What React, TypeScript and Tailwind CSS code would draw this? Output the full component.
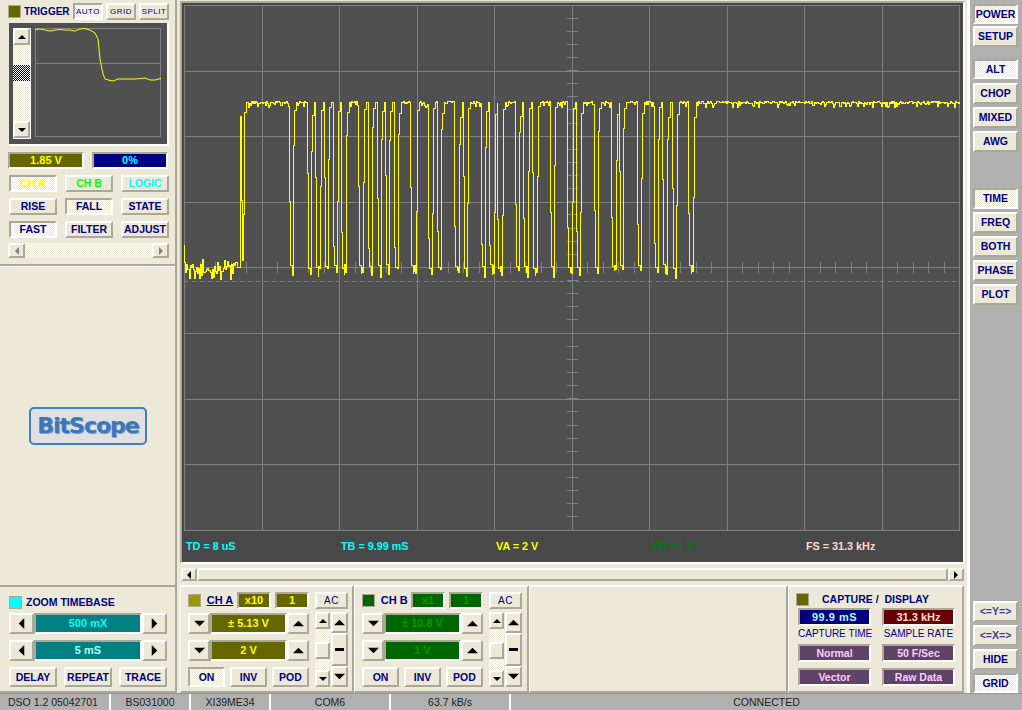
import React from "react";

const raised = "border-2 border-t-white border-l-white border-r-[#aca899] border-b-[#aca899] bg-[#ece9d8]";
const sunken = "border-2 border-t-[#aca899] border-l-[#aca899] border-r-white border-b-white";
const dither = "bg-[repeating-conic-gradient(#ece9d8_0_25%,#ffffff_0_50%)] bg-[length:2px_2px]";
const pressed = "border-2 border-t-[#aca899] border-l-[#aca899] border-r-white border-b-white bg-[repeating-conic-gradient(#ece9d8_0_25%,#ffffff_0_50%)] bg-[length:2px_2px]";

function Btn({ label, className = "", on = false, tone = "text-[#000080] font-bold text-[10.5px]" }: { label: React.ReactNode; className?: string; on?: boolean; tone?: string }) {
  return (
    <div className={`flex items-center justify-center shrink-0 leading-none whitespace-nowrap ${on ? pressed : raised} ${tone} ${className}`}>
      {label}
    </div>
  );
}

function Tri({ dir, s = 11, fill = "#000" }: { dir: "up" | "down" | "left" | "right"; s?: number; fill?: string }) {
  const pts = { up: "5,2.5 0,7.5 10,7.5", down: "0,2.5 10,2.5 5,7.5", left: "2.5,5 7.5,0 7.5,10", right: "2.5,0 2.5,10 7.5,5" }[dir];
  return (
    <svg width={s} height={s} viewBox="0 0 10 10" className="block">
      <polygon points={pts} fill={fill} />
    </svg>
  );
}

function Disp({ label, className = "" }: { label: string; className?: string }) {
  return <div className={`flex items-center justify-center shrink-0 font-bold text-[11px] leading-none whitespace-nowrap ${sunken} ${className}`}>{label}</div>;
}

const edges: [number, number][] = [
  [289, 293], [307, 311], [315, 320], [324, 328], [333, 337], [341, 346], [358, 363], [368, 372], [377, 381], [385, 389],
  [394, 398], [410, 416], [428, 432], [437, 441], [454, 459], [463, 467], [481, 485], [489, 494], [497, 502], [515, 519],
  [523, 528], [532, 537], [550, 554], [567, 572], [576, 580], [594, 598], [611, 616], [619, 623], [637, 641], [654, 658],
  [662, 667], [672, 676], [688, 693],
];

function wave() {
  let seed = 12345;
  const r = (a: number, b: number) => {
    seed = (seed * 1103515245 + 12345) & 0x7fffffff;
    return a + ((seed >> 8) % 1000) / 1000 * (b - a);
  };
  const X = (v: number) => (Math.round(v) + 0.5).toFixed(1);
  const Y = (v: number) => (Math.round(v) + 0.5).toFixed(1);
  let d = `M184.5 244.5 V262.5`;
  let x = 184;
  const lowNoise = () => {
    const v = r(0, 1);
    return v < 0.18 ? r(272, 279) : v < 0.45 ? r(259, 264) : r(264, 272);
  };
  const highNoise = () => {
    const v = r(0, 1);
    return v < 0.18 ? r(104, 107) : r(101, 103);
  };
  while (x < 238) {
    x += 1;
    d += ` H${X(x)} V${Y(lowNoise())}`;
  }
  d += ` H240.5 V116.5 H241.5 V200.5 H242.5 V260.5 H243.5 V214.5 H244.5 V112.5 H246.5 V102.5`;
  x = 246;
  let e = 0;
  while (x < 959) {
    const cur = edges[e];
    if (cur && x >= cur[0] - 1) {
      x = cur[0];
      d += ` H${X(x)} V${Y(r(170, 250))} H${X(x + 1)} V${Y(r(250, 258))}`;
      x += 2;
      while (x < cur[1] - 1) {
        x += 1;
        d += ` V${Y(r(264, 268))} H${X(x)} V${Y(r(268, 278))}`;
      }
      x = cur[1];
      d += ` H${X(x)} V${Y(r(125, 215))} H${X(x + 1)} V${Y(r(106, 118))} H${X(x + 3)} V102.5`;
      x += 3;
      e++;
    } else {
      x += 1;
      d += ` H${X(Math.min(x, 959))} V${Y(highNoise())}`;
    }
  }
  return d;
}

const WAVE = wave();
const VX = Array.from({ length: 9 }, (_, i) => 262 + i * 77.5);
const HY = [71, 136, 202, 333, 399, 464];
const TX = Array.from({ length: 50 }, (_, i) => 200 + i * 15.5);
const TY = Array.from({ length: 40 }, (_, i) => 18 + i * 13.13);

function Scope() {
  return (
    <svg viewBox="182 3 781 528" width={781} height={528} className="block" shapeRendering="crispEdges">
      <rect x="184.5" y="5.5" width="775" height="525" fill="#505050" stroke="#808080" />
      <g stroke="#808080" strokeWidth="1" fill="none">
        {VX.map((x) => <line key={x} x1={Math.floor(x) + 0.5} x2={Math.floor(x) + 0.5} y1="5" y2="530" />)}
        {HY.map((y) => <line key={y} x1="184" x2="960" y1={y + 0.5} y2={y + 0.5} />)}
        <line x1="184" x2="960" y1="267.5" y2="267.5" />
        {TX.map((x) => <line key={x} x1={Math.floor(x) + 0.5} x2={Math.floor(x) + 0.5} y1="262" y2="273" />)}
        {TY.map((y) => <line key={y} x1="567" x2="578" y1={Math.floor(y) + 0.5} y2={Math.floor(y) + 0.5} />)}
        <line x1="184" x2="960" y1="281.5" y2="281.5" strokeDasharray="4 4" />
      </g>
      <path d={WAVE} fill="none" stroke="#ffff00" strokeWidth="1" />
    </svg>
  );
}

function TriggerPlot() {
  return (
    <svg viewBox="35 29 126 110" width={126} height={110} className="block">
      <rect x="35.5" y="29.5" width="125" height="108" fill="none" stroke="#808080" />
      <line x1="35" x2="161" y1="64.5" y2="64.5" stroke="#808080" />
      <polyline fill="none" stroke="#ffff00" strokeWidth="1" points="35,30.5 40,30 45,31 50,32 55,31 60,30.5 65,31 70,31 75,32 80,30 85,29.5 90,31 95,34 98,40 100,60 103,75 105,80 110,81.5 113,82 118,80 125,80 135,80 145,79 150,81 155,81 161,79.5" />
    </svg>
  );
}

function VScroll({ className = "", gap = "h-[13px]", checker = false }: { className?: string; gap?: string; checker?: boolean }) {
  return (
    <div className={`flex flex-col shrink-0 ${dither} ${className}`}>
      <Btn label={<Tri dir="up" s={8} />} className="h-[17px] w-full" />
      <div className={gap} />
      {checker ? (
        <div className="h-[16px] w-full bg-[repeating-conic-gradient(#000000_0_25%,#ffffff_0_50%)] bg-[length:2px_2px]" />
      ) : (
        <Btn label="" className="h-[17px] w-full" />
      )}
      <div className="flex-1" />
      <Btn label={<Tri dir="down" s={8} />} className="h-[17px] w-full" />
    </div>
  );
}

function Channel({ swatch, name, under, x, n, range, off, bg, fg, on }: { swatch: string; name: string; under?: boolean; x: string; n: string; range: string; off: string; bg: string; fg: string; on?: boolean }) {
  const disp = `${bg} ${fg}`;
  return (
    <div className="flex gap-[6px] pl-[7px] pt-[5px]">
      <div className="flex flex-col w-[121px]">
        <div className="flex items-center h-[17px]">
          <div className={`w-[13px] h-[13px] border border-[#aca899] ${swatch}`} />
          <span className={`ml-[6px] w-[31px] font-bold text-[11px] leading-none text-[#000080] whitespace-nowrap ${under ? "underline" : ""}`}>{name}</span>
          <Disp label={x} className={`w-[34px] h-[17px] ${disp}`} />
          <Disp label={n} className={`ml-[4px] w-[34px] h-[17px] ${disp}`} />
        </div>
        <div className="flex mt-[4px] h-[21px]">
          <Btn label={<Tri dir="down" />} className="w-[22px]" />
          <Disp label={range} className={`w-[77px] ${disp}`} />
          <Btn label={<Tri dir="up" />} className="w-[22px]" />
        </div>
        <div className="flex mt-[6px] h-[21px]">
          <Btn label={<Tri dir="down" />} className="w-[22px]" />
          <Disp label={off} className={`w-[77px] ${disp}`} />
          <Btn label={<Tri dir="up" />} className="w-[22px]" />
        </div>
        <div className="flex justify-between mt-[6px]">
          <Btn label="ON" on={on} className="w-[37px] h-[20px]" />
          <Btn label="INV" className="w-[37px] h-[20px]" />
          <Btn label="POD" className="w-[37px] h-[20px]" />
        </div>
      </div>
      <div className="flex flex-col w-[33px]">
        <Btn label="AC" className="w-[33px] h-[17px]" tone="text-[#000080] text-[10px] tracking-[0.5px]" />
        <div className="flex mt-[3px] h-[75px] gap-[1px]">
          <VScroll className="w-[15px]" />
          <div className="flex flex-col w-[17px]">
            <Btn label={<Tri dir="up" />} className="h-[21px] w-full" />
            <Btn label={<div className="w-[9px] h-[3px] bg-black" />} className="h-[33px] w-full" />
            <Btn label={<Tri dir="down" />} className="h-[21px] w-full" />
          </div>
        </div>
      </div>
    </div>
  );
}

export default function App() {
  const rb = "w-[48px] h-[17px]";
  const small = "text-[#000080] text-[8px] tracking-[0.5px]";
  const panel = "shrink-0 border-t-2 border-l border-white border-r-2 border-b-2 border-r-[#aca899] border-b-[#aca899]";
  const capBig = "w-[73px] bg-[#5f4468] text-[#ffccff] !text-[10.5px]";
  return (
    <div className="w-[1022px] h-[710px] flex flex-col overflow-hidden bg-[#ece9d8] font-['Liberation_Sans',Arial,sans-serif]">
      <div className="flex h-[693px]">
        {/* left column */}
        <div className="flex flex-col w-[177px] shrink-0 border-r-2 border-[#aca899]">
          <div className="h-[266px] border-b-2 border-[#aca899] shrink-0">
            <div className="flex items-center h-[17px] mt-[3px] pl-[8px]">
              <div className="w-[13px] h-[13px] bg-[#666600] border border-[#aca899]" />
              <span className="ml-[3px] w-[49px] text-[10px] font-bold text-[#000080] leading-none">TRIGGER</span>
              <Btn label="AUTO" on className="w-[30px] h-[17px]" tone={small} />
              <Btn label="GRID" className="ml-[3px] w-[30px] h-[17px]" tone={small} />
              <Btn label="SPLIT" className="ml-[3px] w-[30px] h-[17px]" tone={small} />
            </div>
            <div className="ml-[9px] mt-[3px] w-[160px] h-[123px] bg-[#505050] border-r-2 border-b-2 border-white flex pt-[5px]">
              <VScroll className="ml-[4px] w-[18px] h-[111px] border-r border-b border-white" gap="h-[20px]" checker />
              <div className="ml-[4px]"><TriggerPlot /></div>
            </div>
            <div className="flex justify-between ml-[8px] w-[160px] mt-[6px]">
              <Disp label="1.85 V" className="w-[76px] h-[17px] bg-[#666600] text-[#ffff00]" />
              <Disp label="0%" className="w-[76px] h-[17px] bg-[#000080] text-[#00ffff]" />
            </div>
            <div className="flex justify-between ml-[9px] w-[160px] mt-[6px]">
              <Btn label="CH A" on className={rb} tone="font-bold text-[10.5px] text-[#ffff00]" />
              <Btn label="CH B" className={rb} tone="font-bold text-[10.5px] text-[#00ff00]" />
              <Btn label="LOGIC" className={rb} tone="font-bold text-[10.5px] text-[#00ffff]" />
            </div>
            <div className="flex justify-between ml-[9px] w-[160px] mt-[6px]">
              <Btn label="RISE" className={rb} />
              <Btn label="FALL" on className={rb} />
              <Btn label="STATE" className={rb} />
            </div>
            <div className="flex justify-between ml-[9px] w-[160px] mt-[6px]">
              <Btn label="FAST" on className={rb} />
              <Btn label="FILTER" className={rb} />
              <Btn label="ADJUST" className={rb} />
            </div>
            <div className={`flex justify-between ml-[8px] w-[161px] h-[15px] mt-[5px] ${dither}`}>
              <Btn label={<Tri dir="left" s={8} fill="#808080" />} className="w-[17px] h-full" />
              <Btn label={<Tri dir="right" s={8} fill="#808080" />} className="w-[17px] h-full" />
            </div>
          </div>
          <div className="flex-1 flex items-center justify-center border-t border-white pl-[1px]">
            <div className="w-[118px] h-[38px] rounded-[5px] border-2 border-[#3f80c4] bg-[#e0e0e2] flex items-center justify-center text-[22px] leading-none text-[#3a78bc] font-bold font-['DejaVu_Sans',sans-serif] [text-shadow:1px_1px_0_#7c99b8] tracking-[-1px]">
              BitScope
            </div>
          </div>
          <div className="h-[108px] shrink-0 border-t-2 border-b-2 border-[#aca899] pt-[8px]">
            <div className="flex items-center pl-[9px] h-[14px]">
              <div className="w-[13px] h-[13px] bg-[#00ffff] border border-[#aca899]" />
              <span className="ml-[4px] text-[10.5px] font-bold text-[#000080] leading-none whitespace-nowrap">ZOOM TIMEBASE</span>
            </div>
            <div className="flex ml-[9px] w-[158px] h-[21px] mt-[4px]">
              <Btn label={<Tri dir="left" />} className="w-[25px]" />
              <Disp label="500 mX" className="flex-1 bg-[#008080] text-[#00ffff]" />
              <Btn label={<Tri dir="right" />} className="w-[25px]" />
            </div>
            <div className="flex ml-[9px] w-[158px] h-[21px] mt-[6px]">
              <Btn label={<Tri dir="left" />} className="w-[25px]" />
              <Disp label="5 mS" className="flex-1 bg-[#008080] text-[#a8ffff]" />
              <Btn label={<Tri dir="right" />} className="w-[25px]" />
            </div>
            <div className="flex justify-between ml-[9px] w-[158px] mt-[6px]">
              <Btn label="DELAY" className="w-[48px] h-[20px]" />
              <Btn label="REPEAT" className="w-[48px] h-[20px]" />
              <Btn label="TRACE" className="w-[48px] h-[20px]" />
            </div>
          </div>
        </div>

        {/* center column */}
        <div className="flex flex-col w-[787px] shrink-0">
          <div className={`ml-[3px] mt-[1px] w-[781px] h-[559px] box-content bg-[#484848] ${sunken}`}>
            <Scope />
            <div className="grid grid-cols-[repeat(5,155px)] w-[781px] h-[31px] items-center font-bold text-[10.8px] leading-none">
              <span className="pl-[4px] text-[#00ffff]">TD = 8 uS</span>
              <span className="pl-[4px] text-[#00ffff]">TB = 9.99 mS</span>
              <span className="pl-[4px] text-[#ffff00]">VA = 2 V</span>
              <span className="pl-[4px] text-[#008000]">VB = 1 V</span>
              <span className="pl-[4px] text-[#ffdcc8]">FS = 31.3 kHz</span>
            </div>
          </div>
          <div className="ml-[4px] mt-[4px] w-[783px] h-[13px] flex justify-between">
            <Btn label={<Tri dir="left" s={8} />} className="w-[16px] h-full" />
            <div className={`flex-1 ${raised}`} />
            <Btn label={<Tri dir="right" s={8} />} className="w-[16px] h-full" />
          </div>
          <div className="flex ml-[3px] flex-1 mt-[4px]">
            <div className={`w-[174px] ${panel}`}><Channel swatch="bg-[#999900]" name="CH A" under x="x10" n="1" range="± 5.13 V" off="2 V" bg="bg-[#666600]" fg="text-[#ffff00]" on /></div>
            <div className={`w-[175px] ${panel}`}><Channel swatch="bg-[#006600]" name="CH B" x="x1" n="1" range="± 10.8 V" off="1 V" bg="bg-[#006600]" fg="text-[#009900]" /></div>
            <div className={`w-[259px] ${panel}`} />
            <div className={`w-[176px] ${panel} pt-[5px] pl-[7px]`}>
              <div className="flex items-center h-[14px]">
                <div className="w-[13px] h-[13px] bg-[#666600] border border-[#aca899]" />
                <span className="ml-[13px] text-[10.5px] font-bold text-[#000080] leading-none whitespace-pre">CAPTURE /  DISPLAY</span>
              </div>
              <div className="flex gap-[11px] ml-[2px] mt-[2px]">
                <Disp label="99.9 mS" className="w-[73px] h-[18px] bg-[#000080] text-[#a8ffff] tracking-[0.5px]" />
                <Disp label="31.3 kHz" className="w-[73px] h-[18px] bg-[#660000] text-[#ffdcc8]" />
              </div>
              <div className="flex gap-[11px] ml-[2px] h-[15px] items-center text-[10px] text-[#000080] leading-none">
                <span className="w-[73px] text-center whitespace-nowrap">CAPTURE TIME</span>
                <span className="w-[73px] text-center whitespace-nowrap">SAMPLE RATE</span>
              </div>
              <div className="flex gap-[11px] ml-[2px] mt-[3px]">
                <Disp label="Normal" className={`h-[18px] ${capBig}`} />
                <Disp label="50 F/Sec" className={`h-[18px] ${capBig}`} />
              </div>
              <div className="flex gap-[11px] ml-[2px] mt-[6px]">
                <Disp label="Vector" className={`h-[18px] ${capBig}`} />
                <Disp label="Raw Data" className={`h-[18px] ${capBig}`} />
              </div>
            </div>
          </div>
        </div>

        {/* right column */}
        <div className="flex-1 ml-[3px] bg-[#b0b0b0] border-l-[3px] border-white flex flex-col pl-[3px] pt-[4px]">
          <Btn label="POWER" on className="w-[45px] h-[20px]" />
          <Btn label="SETUP" className="w-[45px] h-[21px] mt-[2px]" />
          <Btn label="ALT" on className="w-[45px] h-[20px] mt-[12px]" />
          <Btn label="CHOP" className="w-[45px] h-[21px] mt-[4px]" />
          <Btn label="MIXED" className="w-[45px] h-[21px] mt-[3px]" />
          <Btn label="AWG" className="w-[45px] h-[21px] mt-[3px]" />
          <Btn label="TIME" on className="w-[45px] h-[21px] mt-[36px]" />
          <Btn label="FREQ" className="w-[45px] h-[21px] mt-[3px]" />
          <Btn label="BOTH" className="w-[45px] h-[21px] mt-[3px]" />
          <Btn label="PHASE" className="w-[45px] h-[21px] mt-[3px]" />
          <Btn label="PLOT" className="w-[45px] h-[21px] mt-[3px]" />
          <div className="flex-1" />
          <Btn label="<=Y=>" className="w-[45px] h-[21px]" tone="text-[#404090] font-bold text-[10.5px]" />
          <Btn label="<=X=>" className="w-[45px] h-[21px] mt-[3px]" tone="text-[#404090] font-bold text-[10.5px]" />
          <Btn label="HIDE" className="w-[45px] h-[21px] mt-[3px]" />
          <Btn label="GRID" on className="w-[45px] h-[20px] mt-[3px]" />
        </div>
      </div>

      {/* status bar */}
      <div className="flex h-[17px] bg-[#b0b0b0] text-[10.5px] leading-none text-[#222222] border-t border-[#9a9a8c] shrink-0 items-stretch">
        <div className="w-[111px] border-r-2 border-white flex items-center pl-[8px] whitespace-nowrap">DSO 1.2 05042701</div>
        <div className="w-[80px] border-r-2 border-white flex items-center justify-center">BS031000</div>
        <div className="w-[80px] border-r-2 border-white flex items-center justify-center">XI39ME34</div>
        <div className="w-[120px] border-r-2 border-white flex items-center justify-center">COM6</div>
        <div className="w-[120px] border-r-2 border-white flex items-center justify-center">63.7 kB/s</div>
        <div className="flex-1 flex items-center justify-center">CONNECTED</div>
      </div>
    </div>
  );
}
